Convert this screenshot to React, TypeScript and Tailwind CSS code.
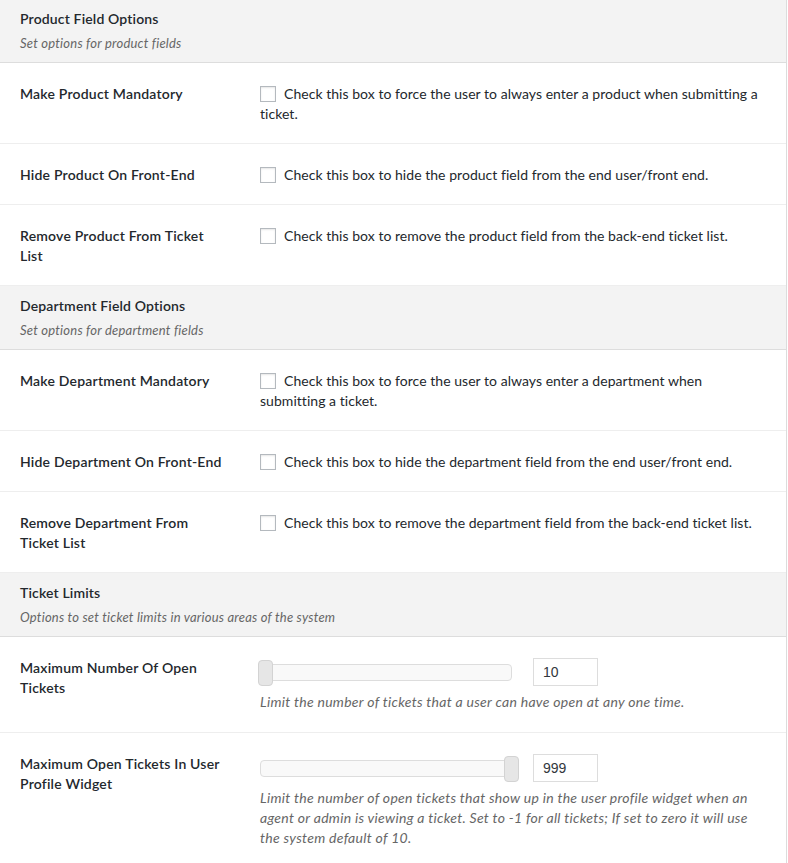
import React from "react";

type Row =
  | { kind: "check"; label: string; text: string }
  | { kind: "slider"; label: string; value: string; pos: "start" | "end"; desc: string };

type Section = { title: string; subtitle: string; rows: Row[] };

const sections: Section[] = [
  {
    title: "Product Field Options",
    subtitle: "Set options for product fields",
    rows: [
      { kind: "check", label: "Make Product Mandatory", text: "Check this box to force the user to always enter a product when submitting a ticket." },
      { kind: "check", label: "Hide Product On Front-End", text: "Check this box to hide the product field from the end user/front end." },
      { kind: "check", label: "Remove Product From Ticket List", text: "Check this box to remove the product field from the back-end ticket list." },
    ],
  },
  {
    title: "Department Field Options",
    subtitle: "Set options for department fields",
    rows: [
      { kind: "check", label: "Make Department Mandatory", text: "Check this box to force the user to always enter a department when submitting a ticket." },
      { kind: "check", label: "Hide Department On Front-End", text: "Check this box to hide the department field from the end user/front end." },
      { kind: "check", label: "Remove Department From Ticket List", text: "Check this box to remove the department field from the back-end ticket list." },
    ],
  },
  {
    title: "Ticket Limits",
    subtitle: "Options to set ticket limits in various areas of the system",
    rows: [
      { kind: "slider", label: "Maximum Number Of Open Tickets", value: "10", pos: "start", desc: "Limit the number of tickets that a user can have open at any one time." },
      { kind: "slider", label: "Maximum Open Tickets In User Profile Widget", value: "999", pos: "end", desc: "Limit the number of open tickets that show up in the user profile widget when an agent or admin is viewing a ticket. Set to -1 for all tickets; If set to zero it will use the system default of 10." },
    ],
  },
];

function Checkbox() {
  return (
    <span className="inline-block align-[-3px] w-4 h-4 mr-2 bg-white border border-[#b4b9be] shadow-[inset_0_1px_2px_rgba(0,0,0,0.1)]" />
  );
}

function Slider({ pos }: { pos: "start" | "end" }) {
  return (
    <div className="relative w-[252px] h-[17px] mt-[6px] rounded-[4px] border border-[#dddddd] bg-[#f9f9f9]">
      <div
        className={
          pos === "start"
            ? "absolute left-[-3px] top-[-5px] w-[15px] h-[26px] rounded-[4px] border border-[#d3d3d3] bg-[#e6e6e6]"
            : "absolute right-[-8px] top-[-5px] w-[15px] h-[26px] rounded-[4px] border border-[#d3d3d3] bg-[#e6e6e6]"
        }
      />
    </div>
  );
}

export default function App() {
  return (
    <div className="w-[788px] min-h-[863px] bg-white overflow-hidden font-['Lato','Open_Sans',sans-serif] text-[14px] leading-[20px] text-[#23282d]">
      <div className="w-[787px] border-r border-[#dcdcdc] -mt-px">
        {sections.map((s) => (
          <div key={s.title}>
            <div className="bg-[#f3f3f3] border-b border-[#dddddd] pl-5 pt-[10px] pb-[9px]">
              <div className="font-semibold tracking-[0.15px]">{s.title}</div>
              <div className="mt-1 italic text-[13px] tracking-[0.22px] text-[#666666]">{s.subtitle}</div>
            </div>
            {s.rows.map((r) => (
              <div key={r.label} className="flex border-b border-[#eeeeee] pl-5">
                <div className="w-[240px] shrink-0 pr-[32px] pt-[21px] pb-[19px] font-semibold tracking-[0.2px]">{r.label}</div>
                {r.kind === "check" ? (
                  <div className="w-[507px] pt-[21px] pb-[19px] tracking-[0.04px]">
                    <Checkbox />
                    {r.text}
                  </div>
                ) : (
                  <div className="w-[507px] pt-[21px] pb-[20px]">
                    <div className="flex items-start gap-[21px]">
                      <Slider pos={r.pos} />
                      <div className="w-[65px] h-[28px] border border-[#dddddd] bg-white flex items-center pl-[9px] font-['Liberation_Sans',Arial,sans-serif] text-[14px] text-[#32373c]">
                        {r.value}
                      </div>
                    </div>
                    <div className="mt-[6px] italic text-[#666666] tracking-[0.29px] pr-2">{r.desc}</div>
                  </div>
                )}
              </div>
            ))}
          </div>
        ))}
      </div>
    </div>
  );
}
